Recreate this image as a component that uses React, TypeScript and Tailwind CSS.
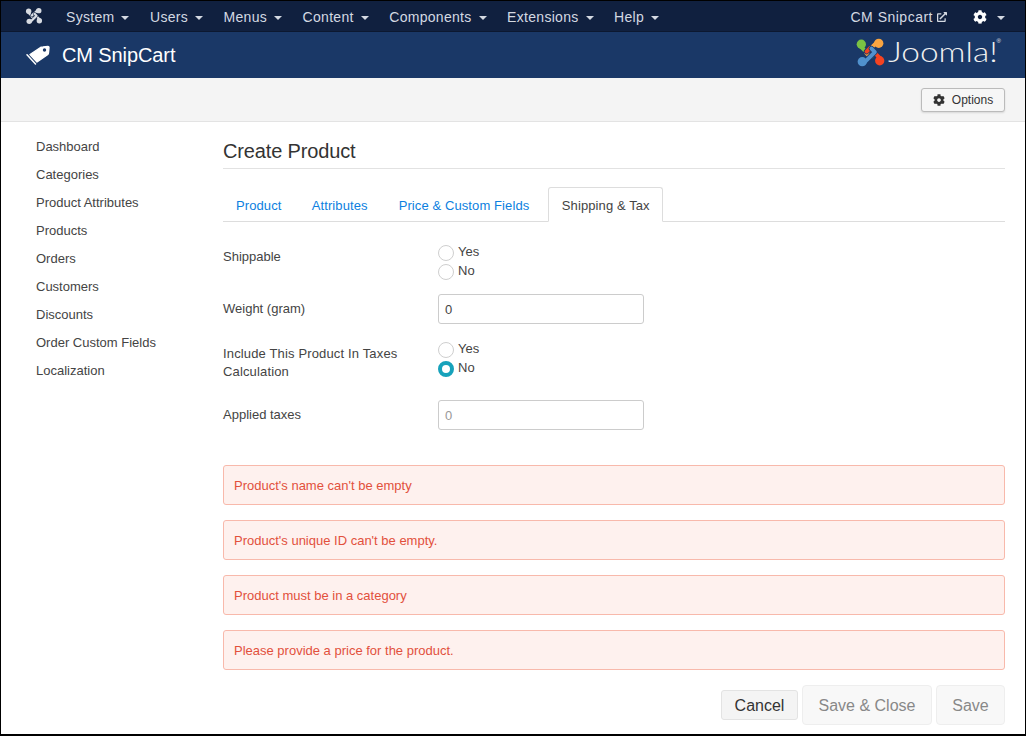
import React from "react";
import { FaCog, FaExternalLinkAlt } from "react-icons/fa";

const font = "font-['Liberation_Sans',Arial,sans-serif]";

const menus = ["System", "Users", "Menus", "Content", "Components", "Extensions", "Help"];
const side = ["Dashboard", "Categories", "Product Attributes", "Products", "Orders", "Customers", "Discounts", "Order Custom Fields", "Localization"];
const errors = ["Product's name can't be empty", "Product's unique ID can't be empty.", "Product must be in a category", "Please provide a price for the product."];

function Caret() {
  return <span className="inline-block ml-[7px] w-0 h-0 border-x-[4px] border-x-transparent border-t-[4px] border-t-current align-middle" />;
}

const pieces = [
  { d: "M6 10 L16.5 20.5 L20 17", knob: [6.5, 7.5], i: 0 },
  { d: "M22 6 L11.5 16.5 L15 20", knob: [24.5, 6.5], i: 1 },
  { d: "M26 22 L15.5 11.5 L12 15", knob: [25.5, 24.5], i: 2 },
  { d: "M10 26 L20.5 15.5 L17 12", knob: [7.5, 25.5], i: 3 },
];

function JoomlaMark({ size, colored, bg }: { size: number; colored?: boolean; bg: string }) {
  const c = colored ? ["#7ac143", "#f9a541", "#f44321", "#5091cd"] : ["#d7dbe2", "#d7dbe2", "#d7dbe2", "#d7dbe2"];
  return (
    <svg width={size} height={size} viewBox="0 0 32 32" fill="none" strokeLinecap="round" strokeLinejoin="round">
      {pieces.map((p) => (
        <g key={p.i}>
          <path d={p.d} stroke={bg} strokeWidth="5.6" />
          <path d={p.d} stroke={c[p.i]} strokeWidth="4" />
          <circle cx={p.knob[0]} cy={p.knob[1]} r="4.8" fill={c[p.i]} />
        </g>
      ))}
    </svg>
  );
}

function TagIcon() {
  return (
    <svg width="24" height="20" viewBox="0 0 24 20" fill="none" className="ml-[25px]">
      <path d="M4 9.5 L14.5 2.5 Q15.5 2 17 2 L22 1.5 Q23 1.5 23 2.5 L22.5 7.5 Q22.5 9 21.5 9.7 L11 17 Z" fill="#fff" stroke="#fff" strokeWidth="1.4" strokeLinejoin="round" />
      <circle cx="18.5" cy="5" r="1.7" fill="#1a3867" />
      <path d="M1 9.8 L9.5 19" stroke="#fff" strokeWidth="1.5" strokeLinecap="round" />
    </svg>
  );
}

function Radio({ label, checked }: { label: string; checked?: boolean }) {
  return (
    <div className="flex items-center h-[19px]">
      <span className={checked ? "w-4 h-4 rounded-full border-[4px] border-[#17a2bb] bg-white" : "w-4 h-4 rounded-full border border-[#cfcfcf] bg-white"} />
      <span className="ml-[4px] text-[13px] text-[#444] relative -top-[1px]">{label}</span>
    </div>
  );
}

export default function App() {
  return (
    <div className={`${font} w-[1026px] h-[736px] overflow-hidden border border-black border-b-2 bg-white flex flex-col text-[13px] text-[#444]`}>
      {/* Top nav */}
      <div className="h-[31px] bg-[#10203f] border-b border-[#0c1830] flex items-center text-[#d4d9e2] text-[14px] tracking-[0.3px] shrink-0">
        <div className="ml-[24px] w-[18px] flex"><JoomlaMark size={18} bg="#10203f" /></div>
        <div className="flex ml-[23px] gap-[20.5px] pt-[2px]">
          {menus.map((m) => (
            <span key={m}>{m}<Caret /></span>
          ))}
        </div>
        <div className="ml-auto flex items-center pt-[2px]">
          <span className="tracking-[0.5px]">CM Snipcart</span>
          <FaExternalLinkAlt className="ml-[4px] text-[10px]" />
          <FaCog className="ml-[26px] text-[14px] text-white" />
          <span className="ml-[3px]"><Caret /></span>
          <span className="w-[20px]" />
        </div>
      </div>
      {/* Header */}
      <div className="h-[46px] bg-[#1a3867] flex items-center text-white shrink-0">
        <TagIcon />
        <span className="ml-[12px] text-[20px] tracking-[-0.1px]">CM SnipCart</span>
        <div className="ml-auto mr-[24px] mb-[6px] flex items-center">
          <JoomlaMark size={31} colored bg="#1a3867" />
          <div className="ml-[2px] w-[113px] h-[30px] relative">
            <span className="block origin-left scale-x-[1.24] text-[27px] font-['Lato'] font-light leading-[30px] text-[#f0f0f0] whitespace-nowrap">Joomla!</span>
            <span className="absolute right-0 top-[1px] text-[6px] leading-none text-[#f0f0f0]">®</span>
          </div>
        </div>
      </div>
      {/* Toolbar */}
      <div className="h-[44px] bg-[#f4f4f4] border-b border-[#e3e3e3] flex items-center justify-end pr-[20px] shrink-0">
        <button className="h-[24px] w-[84px] flex items-center justify-center gap-[7px] rounded-[3px] border border-[#bbb] bg-[#f6f6f6] shadow-[0_1px_2px_rgba(0,0,0,0.12)] text-[12px] text-[#333]">
          <FaCog className="text-[12px]" />
          Options
        </button>
      </div>
      {/* Body */}
      <div className="flex flex-1">
        <nav className="w-[222px] pl-[35px] pt-[11px] shrink-0">
          {side.map((s) => (
            <div key={s} className="h-[28px] leading-[28px] text-[#444]">{s}</div>
          ))}
        </nav>
        <main className="w-[782px]">
          <h1 className="mt-[15px] h-[32px] text-[20px] leading-[28px] tracking-[-0.15px] text-[#333] border-b border-[#e2e2e2]">Create Product</h1>
          <div className="mt-[18px] h-[35px] flex border-b border-[#ddd] pl-[1px] tracking-[0.1px]">
            <span className="px-[12px] pt-[9px] mr-[5.2px] text-[#0d7fe0]">Product</span>
            <span className="px-[13px] pt-[9px] mr-[5px] text-[#0d7fe0]">Attributes</span>
            <span className="px-[13px] pt-[9px] mr-[6px] text-[#0d7fe0]">Price &amp; Custom Fields</span>
            <span className="px-[12.5px] pt-[8px] h-[35px] border border-[#ddd] border-b-white rounded-t-[3px] bg-white text-[#444]">Shipping &amp; Tax</span>
          </div>

          <div className="flex mt-[21px] h-[38px]">
            <div className="w-[215px] pt-[4px]">Shippable</div>
            <div><Radio label="Yes" /><Radio label="No" /></div>
          </div>
          <div className="flex mt-[13px] items-center h-[30px]">
            <div className="w-[215px]">Weight (gram)</div>
            <div className="w-[206px] h-[30px] border border-[#ccc] rounded-[3px] px-[6px] leading-[29px]">0</div>
          </div>
          <div className="flex mt-[16px] h-[40px]">
            <div className="w-[215px] pt-[5px] leading-[18px] tracking-[0.15px]">Include This Product In Taxes<br />Calculation</div>
            <div><Radio label="Yes" /><Radio label="No" checked /></div>
          </div>
          <div className="flex mt-[20px] items-center h-[30px]">
            <div className="w-[215px]">Applied taxes</div>
            <div className="w-[206px] h-[30px] border border-[#ccc] rounded-[3px] px-[6px] leading-[29px] text-[#999]">0</div>
          </div>

          <div className="mt-[35px] flex flex-col gap-[15px]">
            {errors.map((e) => (
              <div key={e} className="h-[40px] leading-[40px] px-[10px] rounded-[3px] border border-[#f8b9ab] bg-[#fef1ee] text-[#e2503c]">{e}</div>
            ))}
          </div>

          <div className="mt-[15px] flex justify-end items-center gap-[4px] text-[16px]">
            <button className="h-[30px] w-[77px] pt-[2px] rounded-[3px] border border-[#e3e3e3] bg-[#f4f4f4] text-[#333]">Cancel</button>
            <button className="h-[40px] w-[130px] pt-[2px] rounded-[4px] border border-[#eee] bg-[#f8f8f8] text-[#888]">Save &amp; Close</button>
            <button className="h-[40px] w-[69px] pt-[2px] rounded-[4px] border border-[#eee] bg-[#f8f8f8] text-[#888]">Save</button>
          </div>
        </main>
      </div>
    </div>
  );
}
